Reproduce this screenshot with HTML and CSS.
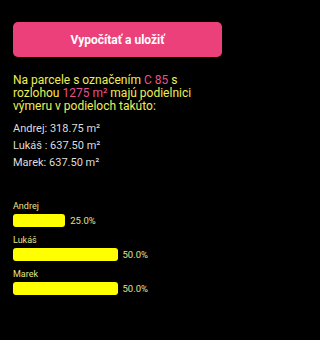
FILE: index.html
```html
<!DOCTYPE html>
<html lang="sk">
<head>
<meta charset="utf-8">
<link rel="stylesheet" href="styles.css">
</head>
<body>
<main class="screen">
  <button class="save-btn">Vypočítať a uložiť</button>
  <p class="summary">Na parcele s označením <span class="hl">C 85</span> s rozlohou <span class="hl">1275 m²</span> majú podielnici výmeru v podieloch takúto:</p>
  <ul class="shares">
    <li>Andrej: 318.75 m²</li>
    <li>Lukáš : 637.50 m²</li>
    <li>Marek: 637.50 m²</li>
  </ul>
  <div class="chart">
    <div class="item">
      <div class="name">Andrej</div>
      <div class="row"><div class="bar" style="width:25%"></div><span class="pct">25.0%</span></div>
    </div>
    <div class="item">
      <div class="name">Lukáš</div>
      <div class="row"><div class="bar" style="width:50%"></div><span class="pct">50.0%</span></div>
    </div>
    <div class="item">
      <div class="name">Marek</div>
      <div class="row"><div class="bar" style="width:50%"></div><span class="pct">50.0%</span></div>
    </div>
  </div>
</main>
</body>
</html>
```
FILE: styles.css
```css
html, body {
  margin: 0;
  padding: 0;
  background: #000;
}
body {
  font-family: Roboto, "Liberation Sans", sans-serif;
  width: 235px;
  height: 340px;
  overflow: hidden;
}
.screen {
  padding: 22px 13px 0 13px;
  display: flex;
  flex-direction: column;
}
.save-btn {
  display: block;
  width: 100%;
  height: 35px;
  border: 0;
  border-radius: 5px;
  background: #ec407a;
  color: #fff;
  font-family: Roboto, "Liberation Sans", sans-serif;
  font-weight: 700;
  font-size: 12px;
  padding: 0;
}
.summary {
  margin: 17px 0 0 0;
  color: #eeee55;
  font-size: 12px;
  line-height: 13px;
}
.hl {
  color: #e8518f;
}
.shares {
  list-style: none;
  margin: 7px 0 0 0;
  padding: 0;
  color: #dddddd;
  font-size: 11px;
}
.shares li {
  height: 17px;
  line-height: 17px;
}
.chart {
  margin-top: 30px;
  display: flex;
  flex-direction: column;
  gap: 8px;
}
.name {
  color: #e6e68a;
  font-size: 9px;
  line-height: 11px;
  height: 11px;
}
.row {
  display: flex;
  align-items: center;
  gap: 5px;
  margin-top: 2px;
}
.bar {
  height: 13px;
  background: #ffff00;
  border-radius: 3px;
}
.pct {
  color: #e2e28e;
  font-size: 9.5px;
}
```
